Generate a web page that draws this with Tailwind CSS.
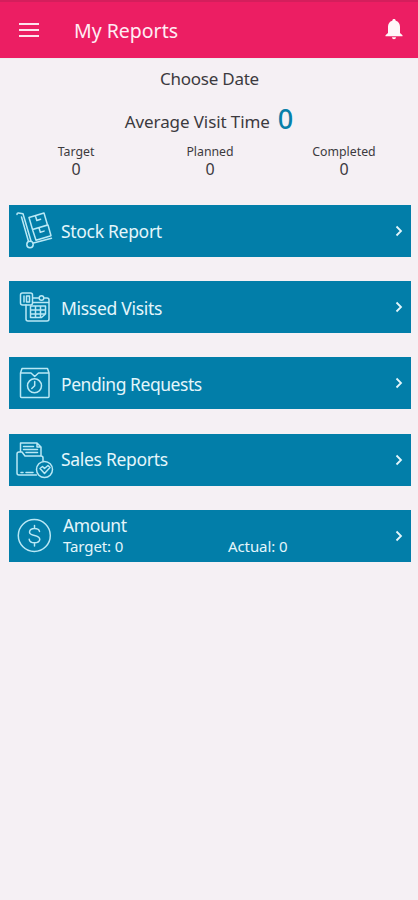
<!DOCTYPE html>
<html lang="en">
<head>
<meta charset="utf-8">
<meta name="viewport" content="width=device-width, initial-scale=1">
<title>My Reports</title>
<script src="https://cdn.jsdelivr.net/npm/@tailwindcss/browser@4"></script>
</head>
<body class="min-h-screen bg-[#f5f0f4] font-['Noto_Sans',sans-serif] text-[#3c3a3e]">
<header class="flex h-[58px] items-center border-t-2 border-[#d41e5c] bg-[#ec1e63] pb-px text-white">
  <svg class="ml-[19px] h-5 w-5 shrink-0" viewBox="0 0 20 20" fill="none" stroke="#fde4ee" stroke-width="2"><path d="M0 4h20M0 10h20M0 16h20"/></svg>
  <h1 class="ml-[35px] pt-[2px] text-[19.500px] leading-6 text-[#ffedf4]">My Reports</h1>
  <svg class="mr-[15px] ml-auto h-[21px] w-[18px]" viewBox="0 0 18 21" fill="#fff5f9"><path d="M9 0c1.100 0 1.700.7 1.700 1.700C13.500 2.500 15 4.700 15 7.800V14l2.500 2.200V17.300H.5V16.200L3 14V7.800C3 4.700 4.500 2.500 7.300 1.700 7.300.7 7.900 0 9 0zM7 18.300h4c0 1.200-.9 2-2 2s-2-.8-2-2z"/></svg>
</header>
<main>
  <section class="h-[147px] border-t border-[#eeeeef]">
    <p class="pt-[8px] pl-px text-center text-[17px] leading-6 tracking-[-0.25px]">Choose Date</p>
    <div class="mt-[9px] flex h-10 items-center justify-center gap-[8px] text-[17px]">
      <span class="pt-[3px] tracking-[-0.1px]">Average Visit Time</span><span class="pb-[3px] text-[27px] leading-9 font-medium text-[#087fa9]">0</span>
    </div>
    <div class="mx-[8px] mt-[3px] grid grid-cols-3 text-center text-[12.300px] leading-[17px]">
      <div class="pl-[2px]">Target<p class="text-[16px] leading-[18px]">0</p></div>
      <div class="pl-[2px]">Planned<p class="text-[16px] leading-[18px]">0</p></div>
      <div class="pl-[2px]">Completed<p class="text-[16px] leading-[18px]">0</p></div>
    </div>
  </section>
  <nav class="ml-[9px] flex w-[402px] flex-col gap-[24.200px] text-[#e4f6fb]">
    <a class="flex h-[52px] items-center bg-[#027ea9]">
      <svg class="h-[52px] w-[52px] shrink-0" viewBox="0 0 52 52" fill="none" stroke="#b9e8f5" stroke-width="1.500" stroke-linejoin="round" stroke-linecap="round"><path d="M8 9.500Q8 7.800 9.500 8L14 8.800 22 36M12.500 12 19.500 36.500M24.500 38 42.500 33.200M20 12.500 35 8 38.500 20 23.500 24.500zM23.500 24.500 39 20 42 30.800 27 35.300zM26.500 11l1.300 4.500 3.800-1.200M30 22.800l1.300 4.500 3.800-1.200"/><circle cx="21" cy="39.500" r="3.200"/></svg>
      <span class="text-[17.500px] tracking-[-0.3px]">Stock Report</span>
      <svg class="mr-[8px] ml-auto h-3 w-2" viewBox="0 0 8 12" fill="none" stroke="currentColor" stroke-width="1.800"><path d="M1.500 1.500 6 6l-4.500 4.500"/></svg>
    </a>
    <a class="flex h-[52px] items-center bg-[#027ea9]">
      <svg class="h-[52px] w-[52px] shrink-0" viewBox="0 0 52 52" fill="none" stroke="#b9e8f5" stroke-width="1.500" stroke-linejoin="round" stroke-linecap="round"><rect x="11.500" y="12" width="12" height="12" rx="2"/><path d="M15 15v6M17.500 15h3v6h-3zM24 17h5.500M35.500 17H38q2 0 2 2v19q0 2-2 2H19q-2 0-2-2V24M24 21.500H40M21.500 25H36.500V33L32.500 36.500H21.500zM21.500 29H36.500M21.500 33H36.500M26.500 25V36.500M31.500 25V36.500"/><circle cx="32.500" cy="17" r="2.300"/></svg>
      <span class="pt-px text-[17.500px] tracking-[-0.3px]">Missed Visits</span>
      <svg class="mr-[8px] ml-auto h-3 w-2" viewBox="0 0 8 12" fill="none" stroke="currentColor" stroke-width="1.800"><path d="M1.500 1.500 6 6l-4.500 4.500"/></svg>
    </a>
    <a class="flex h-[52px] items-center bg-[#027ea9]">
      <svg class="h-[52px] w-[52px] shrink-0" viewBox="0 0 52 52" fill="none" stroke="#b9e8f5" stroke-width="1.500" stroke-linejoin="round" stroke-linecap="round"><path d="M11.500 16 13 11.500H38.500L40 16V39.500Q40 40.500 39 40.500H12.500Q11.500 40.500 11.500 39.500zH22L25.700 19.500 29.500 16H40M25.700 24.500V28.700L22.800 31.500"/><circle cx="25.500" cy="28.800" r="7"/></svg>
      <span class="pt-px text-[17.500px] tracking-[-0.45px]">Pending Requests</span>
      <svg class="mr-[8px] ml-auto h-3 w-2" viewBox="0 0 8 12" fill="none" stroke="currentColor" stroke-width="1.800"><path d="M1.500 1.500 6 6l-4.500 4.500"/></svg>
    </a>
    <a class="flex h-[52px] items-center bg-[#027ea9]">
      <svg class="h-[52px] w-[52px] shrink-0" viewBox="0 0 52 52" fill="none" stroke="#b9e8f5" stroke-width="1.500" stroke-linejoin="round" stroke-linecap="round"><path d="M27.500 41H10Q8 41 8 39V20Q8 18 10 18H13L16 22H32Q34 22 34 24V27M11.500 18V9H28L32 13V22M28 9V13H32M14.500 12.500H24.500M14.500 15.500H28.500M17 18.500H28.500M12 38.500H14M17 38.500H24"/><circle cx="35.500" cy="35.500" r="8"/><path d="m31 34.500 2.500-2 2 2 3.500-3 2 2-5.500 6z"/></svg>
      <span class="text-[17.500px] tracking-[-0.3px]">Sales Reports</span>
      <svg class="mr-[8px] ml-auto h-3 w-2" viewBox="0 0 8 12" fill="none" stroke="currentColor" stroke-width="1.800"><path d="M1.500 1.500 6 6l-4.500 4.500"/></svg>
    </a>
    <a class="flex h-[52px] items-center bg-[#027ea9]">
      <svg class="h-[52px] w-[52px] shrink-0" viewBox="0 0 52 52" fill="none" stroke="#b9e8f5" stroke-width="1.500" stroke-linecap="round"><circle cx="25.300" cy="25.500" r="16"/><path d="M30.500 21.500Q30 18.500 25.500 18.500T20.500 22Q20.500 24.500 25.500 25.500T30.800 29.300Q30.500 32.800 25.500 32.800T20.200 29.300M25.500 15.500V18.500M25.500 32.800V36"/></svg>
      <div class="ml-[2px] grid grid-cols-[165px_auto] pb-px text-[15px] leading-5 tracking-[-0.1px]">
        <span class="col-span-2 text-[17.500px] leading-[22px] tracking-[-0.4px]">Amount</span>
        <span>Target: 0</span><span>Actual: 0</span>
      </div>
      <svg class="mr-[8px] ml-auto h-3 w-2" viewBox="0 0 8 12" fill="none" stroke="currentColor" stroke-width="1.800"><path d="M1.500 1.500 6 6l-4.500 4.500"/></svg>
    </a>
  </nav>
</main>
</body>
</html>
